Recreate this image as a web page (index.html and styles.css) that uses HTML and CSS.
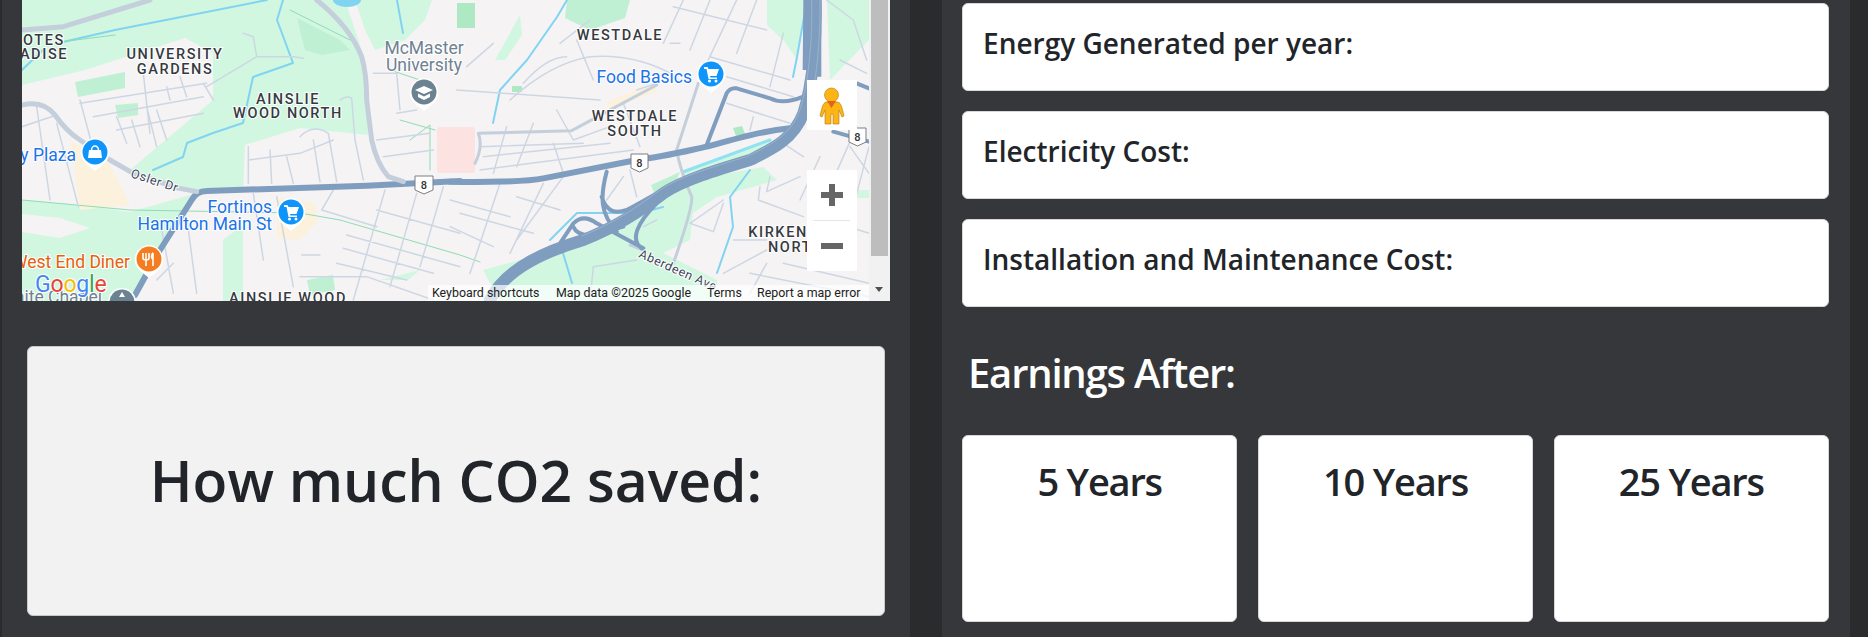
FILE: index.html
```html
<!DOCTYPE html>
<html lang="en">
<head>
<meta charset="utf-8">
<title>Solar estimate</title>
<link rel="stylesheet" href="styles.css">
</head>
<body>
<main class="page">
  <section class="panel panel-left">
    <div class="map">
      <svg class="map-svg" viewBox="22 0 868 301" width="868" height="301" aria-label="Map">
        <rect class="land" x="22" y="0" width="868" height="301"/>
        <path class="green" d="M22,0H345L365,60L368,135L300,128L245,145L243,191L197,193L170,190L130,170L213,100L213,53L185,38L85,70L22,85Z"/>
        <path class="green" d="M22,200L80,205L130,212L197,193L155,255L135,301H22ZM223,240L243,225L243,301H223Z"/>
        <path class="land" d="M22,214L60,218L90,228L60,238L22,232Z"/>
        <path class="green" d="M355,0H432L425,20L405,40L375,50L365,30Z"/>
        <path class="green" d="M495,60L520,15L522,35L505,60ZM767,0H805L797,60L785,42L767,25ZM827,0H869V40L830,80ZM408,280H380L420,270Z"/>
        <path class="green" d="M483,270L567,247L637,207L690,180L763,167L777,180L717,197L693,213L690,240L663,253L717,280L717,301H500ZM683,170L770,140L780,150L690,185ZM858,190H869V198H855Z"/>
        <path class="green-dark" d="M297,18L340,40L350,50L322,55L305,50ZM75,82L125,72L125,88L78,97ZM115,105L138,103L138,115L118,118ZM307,280L333,275L335,290L310,295ZM567,0H630L625,18L590,30L565,18ZM651,185L680,172L672,190L655,195Z"/>
        <path class="green-mid" d="M457,3H475V28H457ZM512,86H522V92H512ZM733,128L742,126L745,134L736,136Z"/>
        <path class="sand" d="M70,140L110,165L130,205L80,210ZM277,197L315,203L317,222L300,240L277,238ZM606,102L655,83L657,92L610,108Z"/>
        <rect class="hospital" x="437" y="127" width="38" height="46" rx="3"/>

        <path class="water" d="M63,42L115,30L267,0M283,0L277,20L293,63L253,77L243,123L213,133L187,143L183,157L153,170M397,0L403,33M567,0L557,17L527,60L500,90L493,123M807,0L797,57L793,77M750,170L730,197L733,227L717,273M563,253L572,283M663,207L640,213L577,213L550,240M22,70L45,48"/>
        <path class="water-wide" d="M770,140L683,172"/>
        <ellipse class="pond" cx="347" cy="0" rx="14" ry="7"/>

        <path class="trail" d="M22,200L130,210L300,213L340,220L460,255L480,262M290,10L350,40M115,35L60,42M410,140L430,125V170M400,120L435,130M390,70L420,80"/>

        <g transform="scale(.33333)">
          <path class="street" d="M66,380L170,345M110,320L150,600M170,370L235,620M430,220L450,400M500,260L510,300M540,230L560,290M610,250L640,300M240,310L620,250M280,350L610,290M350,390L610,340M440,320L470,440M470,330L500,420M240,300L280,450M350,350L380,430M395,360L420,440M620,260L770,170L760,110L730,100M770,170L880,170L910,175"/>
          <path class="street" d="M745,440V550M810,450L815,550M860,470L880,550M900,410Q940,370 985,400L1010,545M940,420L960,545M1020,300Q1040,285 1055,295L1065,420L1090,540M745,480L900,460L1000,420M1130,420L1290,400M1150,470L1300,450M1190,340L1250,330M1120,220L1190,220L1200,330"/>
          <path class="street" d="M480,660L520,880M560,650L590,880M760,580L790,780M830,590L880,860M1000,570L965,630L1130,680M1155,570L1060,900M1250,580L1170,860M1330,560L1260,800M1040,705L1380,800M1030,745L1300,820M1010,790L1220,840M1130,630L1380,700M900,830L1100,830L1300,900M470,840L520,790M905,765L960,765"/>
        </g>
        <g transform="translate(450 0) scale(.33333)">
          <path class="street" d="M330,130L420,60M20,270L450,300M50,200L130,130M380,120L430,240M180,300Q300,190 420,170Q560,160 680,230M220,250Q290,170 350,170M700,0L640,130M780,0L720,150M860,0L770,190M920,0L860,160M670,20L950,90M660,130H690M780,170L1020,240M830,230L1030,290M1000,100L960,260M830,310L1020,370M910,350L900,390M1130,0L1210,60L1250,180M1170,180L1250,220"/>
          <path class="street" d="M90,440L400,430M100,470L480,430M90,510L550,450M370,420L480,380M320,330L370,420M310,430L340,520M250,370L200,500M170,380L130,520M520,310L570,440M560,270L620,250"/>
          <path class="street" d="M150,550L60,820M280,550L180,760M340,530L200,720M520,530L470,600M540,510L560,590M0,600L180,650M0,680L130,740M200,590L330,630M30,640L250,700"/>
          <path class="street" d="M1000,430L1060,470M1110,470L1050,600M930,560L925,600L1060,650M960,530L950,575L1050,530M1220,380L1140,560M1200,440L1257,520M1257,440L1210,620L1190,770M1100,650L1257,700M900,820L1257,890M950,790L900,880M1000,790L1257,850M720,670L820,600M720,670L790,695L820,610M580,680L620,660M420,900L430,800L560,780M850,720H950M950,750L820,820"/>
          <path class="arterial-thin" d="M85,400L365,392L620,255M745,250L680,450Q690,510 725,590Q730,620 670,790M85,400Q100,440 75,490M540,735L585,752"/>
          <path class="highway-ramp" d="M770,435L830,280Q840,262 860,265L960,295Q1000,315 1060,290M470,515C450,590 450,640 500,695M455,590C470,640 500,640 530,630C570,610 600,590 640,570M330,730L370,670Q400,640 440,670L580,745M370,680Q380,705 420,705L520,680M620,610C560,670 540,720 575,745M1150,395L1257,425M1220,250L1257,265"/>
          <path class="highway" d="M0,545C100,548 230,545 280,535C380,515 480,495 560,480C640,470 700,455 770,440C860,415 930,395 1020,385"/>
          <path class="highway-wide" d="M1097,0C1100,100 1090,250 1060,340C1030,420 960,450 900,480C800,510 700,540 640,580C560,640 500,680 400,720C300,750 170,800 120,900"/>
          <path class="highway-top" d="M1072,0L1070,210M1102,0L1102,230"/>
          <path class="highway-thin" d="M1085,0C1088,100 1078,250 1048,335C1020,410 950,440 890,470C790,500 690,530 630,570C550,630 490,670 395,708M1110,0C1112,100 1102,250 1072,345"/>
        </g>
        <g transform="scale(.33333)">
          <path class="highway" d="M575,600Q590,573 620,573L1100,557L1380,543M575,600L480,750L405,885"/>
          <path class="arterial" d="M66,315Q130,300 165,345Q200,395 240,420L330,480L400,520L540,565L590,575M66,90L190,80L450,0M950,0Q1050,80 1085,170Q1100,220 1100,300L1115,420Q1130,490 1165,530L1210,545"/>
        </g>

        <g class="shield"><path d="M415,176H433V190L424,194L415,190Z"/><text x="424" y="189">8</text></g>
        <g class="shield"><path d="M631,154H648V168L639.500,172L631,168Z"/><text x="639.500" y="167">8</text></g>
        <g class="shield"><path d="M849,128H866V142L857.500,146L849,142Z"/><text x="857.500" y="141">8</text></g>

        <g class="area">
          <text x="175" y="59">UNIVERSITY</text><text x="175" y="74">GARDENS</text>
          <text x="288" y="104">AINSLIE</text><text x="288" y="118">WOOD NORTH</text>
          <text x="620" y="40">WESTDALE</text>
          <text x="635" y="121">WESTDALE</text><text x="635" y="136">SOUTH</text>
          <text x="44" y="45">OTES</text><text x="44" y="59">ADISE</text>
          <text x="288" y="303">AINSLIE WOOD</text>
          <text x="778" y="237">KIRKEN</text><text x="790" y="252">NORT</text>
        </g>
        <text class="poi poi-grey" x="424" y="54">McMaster</text>
        <text class="poi poi-grey" x="424" y="71">University</text>
        <text class="poi poi-blue poi-end" x="76" y="161">y Plaza</text>
        <text class="poi poi-blue poi-end" x="272" y="213">Fortinos</text>
        <text class="poi poi-blue poi-end" x="272" y="230">Hamilton Main St</text>
        <text class="poi poi-blue poi-end" x="692" y="83">Food Basics</text>
        <text class="poi poi-orange poi-end" x="130" y="268">West End Diner</text>
        <text class="poi poi-grey poi-end" x="102" y="303">White Chapel</text>
        <text class="road" transform="translate(130,177) rotate(18)">Osler Dr</text>
        <text class="road" transform="translate(638,257) rotate(24)">Aberdeen Ave</text>

        <g class="pin"><path class="pin-halo" d="M95,138a14.500,14.500 0 0 1 8,26.500L95,171L87,164.500A14.500,14.500 0 0 1 95,138Z"/><circle class="pin-blue" cx="95" cy="152" r="12.500"/><path class="glyph" d="M89,150H101L102,158H88Z"/><path class="glyph-line-thin" d="M91.500,150A3.500,4 0 0 1 98.500,150"/></g>
        <g class="pin"><path class="pin-halo" d="M291,198a14.500,14.500 0 0 1 8,26.500L291,231L283,224.500A14.500,14.500 0 0 1 291,198Z"/><circle class="pin-blue" cx="291" cy="212" r="12.500"/><path class="glyph" d="M284,205H287.500L288.500,207H299L296.500,214H290L290.500,215.500H297V217H288.500L286.500,207H284Z"/><circle class="glyph-dot" cx="289.500" cy="219" r="1.500"/><circle class="glyph-dot" cx="296" cy="219" r="1.500"/></g>
        <g class="pin"><path class="pin-halo" d="M711,60a14.500,14.500 0 0 1 8,26.500L711,93L703,86.500A14.500,14.500 0 0 1 711,60Z"/><circle class="pin-blue" cx="711" cy="74" r="12.500"/><path class="glyph" d="M704,67H707.500L708.500,69H719L716.500,76H710L710.500,77.500H717V79H708.500L706.500,69H704Z"/><circle class="glyph-dot" cx="709.500" cy="81" r="1.500"/><circle class="glyph-dot" cx="716" cy="81" r="1.500"/></g>
        <g class="pin"><path class="pin-halo" d="M149,245a14.500,14.500 0 0 1 8,26.500L149,278L141,271.500A14.500,14.500 0 0 1 149,245Z"/><circle class="pin-orange" cx="149" cy="259" r="12.500"/><path class="glyph-line" d="M143,253V258Q143,260 146,260Q149,260 149,258V253M146,253V266M153,253V266"/><path class="glyph" d="M153,252C150,254 150,259 153,260Z"/></g>
        <g class="pin"><path class="pin-halo" d="M424,78a14.500,14.500 0 0 1 8,26.500L424,111L416,104.500A14.500,14.500 0 0 1 424,78Z"/><circle class="pin-grey" cx="424" cy="92" r="12.500"/><path class="glyph" d="M415,90L424,86L433,90L424,94Z"/><path class="glyph" d="M418,93.500L424,96.500L430,93.500V97L424,100L418,97Z"/></g>
        <g class="pin"><circle class="pin-halo" cx="122" cy="302" r="14"/><circle class="pin-grey" cx="122" cy="302" r="12.500"/><path class="glyph" d="M122,292L125,297H119Z"/></g>

        <text class="google" x="35" y="292"><tspan class="g-blue">G</tspan><tspan class="g-red">o</tspan><tspan class="g-yellow">o</tspan><tspan class="g-blue">g</tspan><tspan class="g-green">l</tspan><tspan class="g-red">e</tspan></text>

        <rect class="attr-bg" x="428" y="285" width="441" height="16"/>
        <text class="attr" x="432" y="297">Keyboard shortcuts</text>
        <text class="attr" x="556" y="297">Map data ©2025 Google</text>
        <text class="attr" x="707" y="297">Terms</text>
        <text class="attr" x="757" y="297">Report a map error</text>

        <rect class="track" x="869" y="0" width="21" height="301"/>
        <rect class="thumb" x="871" y="0" width="17" height="256"/>
        <path class="arrow" d="M875,287H883L879,292Z"/>

        <rect class="ctl" x="807" y="80" width="50" height="50"/>
        <g class="pegman">
          <path d="M826,102C823,103 822,107 820,116L822,117L825,110V124H831V114H833V124H839V110L842,117L844,116C842,107 841,103 838,102Z"/>
          <circle cx="831.500" cy="95" r="7"/>
          <path class="peg-scarf" d="M827,101H836L831.500,108Z"/>
        </g>
        <rect class="ctl" x="807" y="170" width="50" height="101"/>
        <rect class="ctl-sep" x="813" y="220" width="37" height="1"/>
        <path class="ctl-icon" d="M829,184H835V192H843V198H835V206H829V198H821V192H829ZM821,243H843V249H821Z"/>
      </svg>
    </div>
    <div class="co2-card">
      <h1 class="co2-title">How much CO2 saved:</h1>
    </div>
  </section>

  <section class="panel panel-right">
    <div class="info-card"><h2 class="info-title">Energy Generated per year:</h2></div>
    <div class="info-card"><h2 class="info-title">Electricity Cost:</h2></div>
    <div class="info-card"><h2 class="info-title">Installation and Maintenance Cost:</h2></div>
    <h2 class="earnings-title">Earnings After:</h2>
    <div class="years">
      <div class="year-card"><h3 class="year-title">5 Years</h3></div>
      <div class="year-card"><h3 class="year-title">10 Years</h3></div>
      <div class="year-card"><h3 class="year-title">25 Years</h3></div>
    </div>
  </section>
</main>
</body>
</html>
```

FILE: styles.css
```css
* { box-sizing: border-box; }
html, body { margin: 0; height: 637px; overflow: hidden; background: #2a2b2d; }
body { font-family: "Open Sans", "Noto Sans", sans-serif; color: #212529; }
.page { display: flex; gap: 32px; padding: 0 18px 0 2px; height: 637px; }
.panel { flex: 0 0 908px; background: #36373a; height: 637px; }
.panel-left { padding: 0 20px; }
.panel-right { padding: 3px 21px 0 20px; display: flex; flex-direction: column; }
.map { height: 301px; width: 868px; }
.map-svg { display: block; }
.co2-card { margin: 45px 5px 0 5px; height: 270px; background: #f2f2f2; border: 1px solid #c9c9c9; border-radius: 6px; display: flex; align-items: center; justify-content: center; }
.co2-title { margin: 0 0 2px; font-size: 57px; font-weight: 600; letter-spacing: 0; line-height: 1.2; }
.info-card { height: 88px; background: #fff; border: 1px solid #d8d8d8; border-radius: 6px; padding: 23px 20px 0; margin-bottom: 20px; }
.info-title { margin: 0; font-size: 28px; font-weight: 600; letter-spacing: 0; line-height: 1.2; }
.earnings-title { margin: 22px 0 38px 6px; font-size: 40px; font-weight: 600; letter-spacing: -1.200px; line-height: 1.2; color: #fff; }
.years { display: flex; gap: 20.500px; }
.year-card { flex: 1; height: 187px; background: #fff; border: 1px solid #d8d8d8; border-radius: 6px; padding: 23px 0 0; text-align: center; }
.year-title { margin: 0; font-size: 38px; font-weight: 600; letter-spacing: -1.200px; line-height: 1.2; }

.land { fill: #f5f3f4; }
.green { fill: #d1f7e1; }
.green-dark { fill: #bff0d3; }
.green-mid { fill: #aee9c4; }
.sand { fill: #fbf1dc; }
.hospital { fill: #fce3e1; }
.water, .water-wide, .trail, .street, .arterial, .arterial-thin, .highway, .highway-wide, .highway-top, .highway-ramp, .highway-thin { fill: none; stroke-linejoin: round; stroke-linecap: round; }
.water { stroke: #80d4f2; stroke-width: 2; }
.water-wide { stroke: #90e2f2; stroke-width: 3; }
.pond { fill: #80d4f2; }
.trail { stroke: #8fdcb4; stroke-width: 1; }
.street { stroke: #cdd7e3; stroke-width: 4.500; }
.arterial { stroke: #c4cfdb; stroke-width: 15; }
.arterial-thin { stroke: #c4cfdb; stroke-width: 9; }
.highway { stroke: #7f9dbf; stroke-width: 18; }
.highway-ramp { stroke: #7f9dbf; stroke-width: 12; }
.highway-wide { stroke: #7f9dbf; stroke-width: 36; }
.highway-top { stroke: #7f9dbf; stroke-width: 24; stroke-linecap: butt; }
.highway-thin { stroke: #9ab1cc; stroke-width: 3; }
.shield path { fill: #fff; stroke: #7a7f85; stroke-width: 1; }
.shield text { font: 500 11px Roboto, sans-serif; fill: #333; text-anchor: middle; }
.area text { font: 500 14.500px Roboto, sans-serif; letter-spacing: 1.600px; fill: #363a3f; text-anchor: middle; paint-order: stroke; stroke: #fff; stroke-width: 2px; }
.poi { font: 400 17.500px Roboto, sans-serif; paint-order: stroke; stroke: #fff; stroke-width: 2px; }
.poi-end { text-anchor: end; }
.poi-blue { fill: #1a73e8; }
.poi-orange { fill: #e8600a; }
.poi-grey { fill: #6f8190; text-anchor: middle; }
.poi-grey.poi-end { text-anchor: end; }
.road { font: 400 12.500px Roboto, sans-serif; letter-spacing: .6px; fill: #3c4658; paint-order: stroke; stroke: #fff; stroke-width: 2px; }
.pin-halo { fill: #fff; }
.pin-blue { fill: #0f94fb; }
.pin-orange { fill: #f67c20; }
.pin-grey { fill: #6b8290; }
.glyph, .glyph-dot { fill: #fff; }
.glyph-line { fill: none; stroke: #fff; stroke-width: 1.600; }
.glyph-line-thin { fill: none; stroke: #fff; stroke-width: 1.500; }
.google { font: 400 23px Roboto, sans-serif; letter-spacing: -.2px; paint-order: stroke; stroke: #fff; stroke-width: 2px; }
.g-blue { fill: #4285f4; }
.g-red { fill: #ea4335; }
.g-yellow { fill: #fbbc05; }
.g-green { fill: #34a853; }
.attr-bg { fill: #fff; fill-opacity: .7; }
.attr { font: 400 12.400px Roboto, sans-serif; fill: #222; }
.track { fill: #f1f1f1; }
.thumb { fill: #bdbdbd; }
.arrow { fill: #505050; }
.ctl { fill: #fff; }
.ctl-sep { fill: #e6e6e6; }
.ctl-icon { fill: #666; }
.pegman path, .pegman circle { fill: #fdb515; stroke: #b07a10; stroke-width: .6; }
.pegman .peg-scarf { fill: #e0641c; stroke: none; }
```
